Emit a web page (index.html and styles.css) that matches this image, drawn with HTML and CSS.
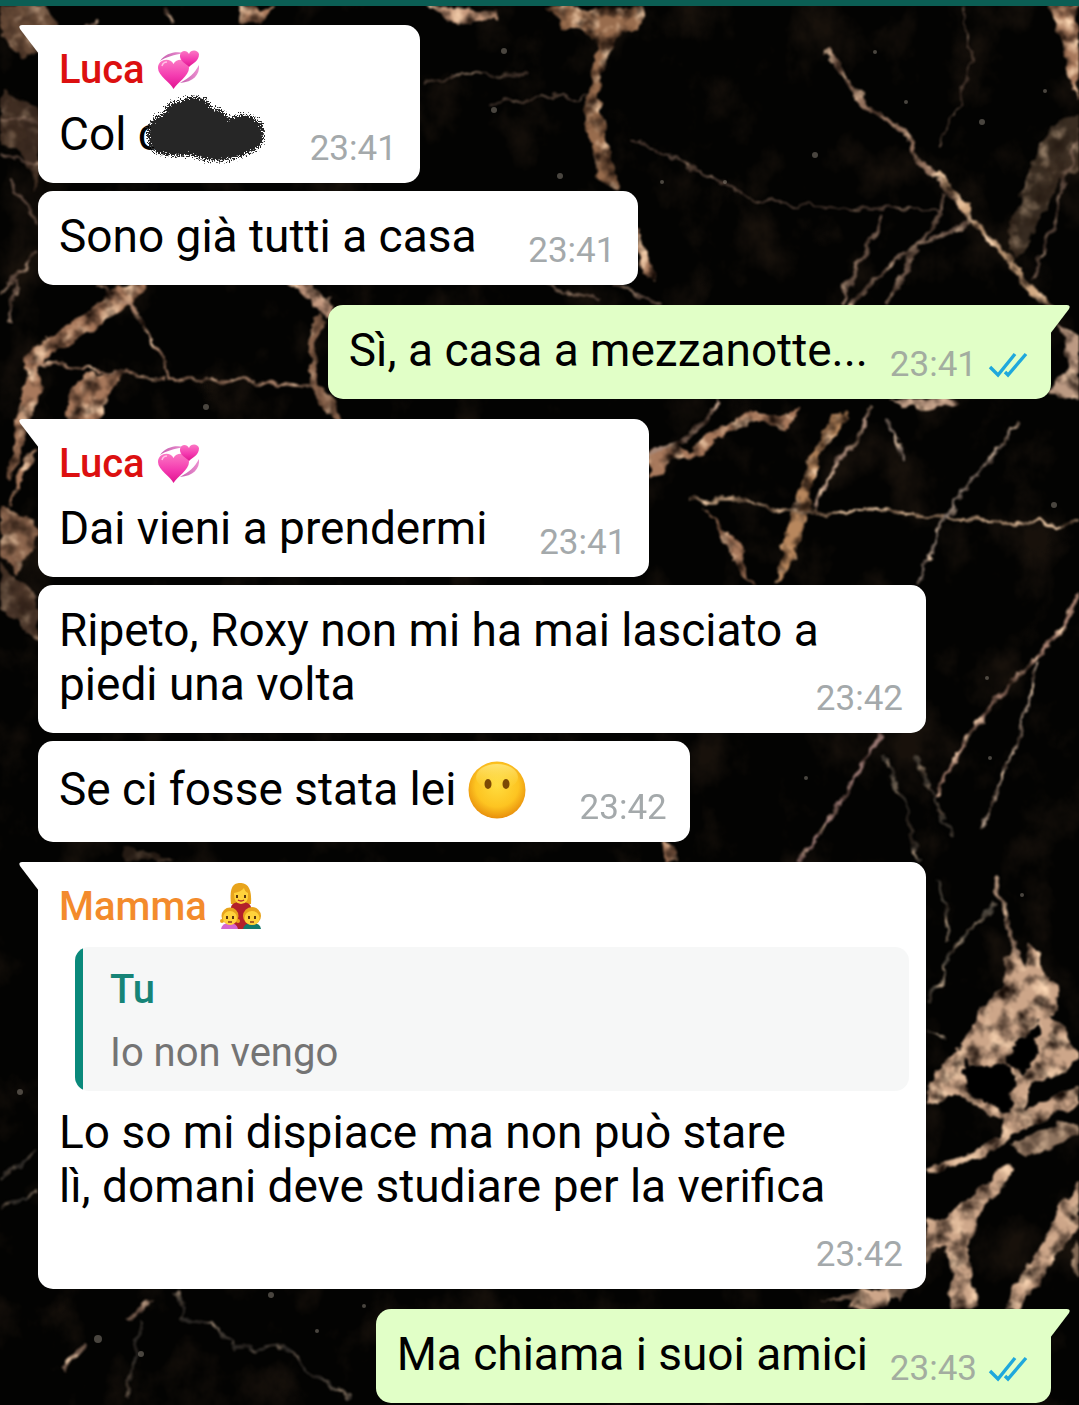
FILE: index.html
```html
<!DOCTYPE html>
<html lang="it">
<head>
<meta charset="utf-8">
<meta name="viewport" content="width=device-width, initial-scale=1">
<title>Chat</title>
<link rel="stylesheet" href="styles.css">
</head>
<body>
<svg class="defs" aria-hidden="true">
  <defs>
    <linearGradient id="pink" x1="0" y1="0" x2="0" y2="1"><stop offset="0" stop-color="#fb78c4"/><stop offset=".55" stop-color="#f43bb0"/><stop offset="1" stop-color="#e0148f"/></linearGradient>
    <linearGradient id="orbit" x1="0" y1="0" x2="1" y2="0"><stop offset="0" stop-color="#c45fae"/><stop offset="1" stop-color="#ec8fd0"/></linearGradient>
    <radialGradient id="face" cx=".5" cy=".42" r=".58"><stop offset="0" stop-color="#ffdc3e"/><stop offset=".65" stop-color="#fdc421"/><stop offset="1" stop-color="#e88f0c"/></radialGradient>
    <linearGradient id="shine" x1="0" y1="0" x2="0" y2="1"><stop offset="0" stop-color="#fff7a8" stop-opacity=".6"/><stop offset="1" stop-color="#ffe14a" stop-opacity="0"/></linearGradient>
    <filter id="grain" x="-5%" y="-5%" width="110%" height="110%">
      <feTurbulence type="fractalNoise" baseFrequency=".8" numOctaves="1" seed="4" result="n"/>
      <feDisplacementMap in="SourceGraphic" in2="n" scale="16" xChannelSelector="R" yChannelSelector="G"/>
    </filter>
    <symbol id="hearts" viewBox="0 0 42 42">
      <path d="M2 12C8 4 17 2 26 4C16 6 8 8 2 12Z" fill="url(#orbit)"/>
      <path d="M41 16C42 26 35 33 22 34C31 29 37 24 41 16Z" fill="url(#orbit)"/>
      <path d="M15.500 40C13 34 0 27 0 19C0 10 12 8 15.500 15C19 8 31 10 31 19C31 27 19 34 15.500 40Z" fill="url(#pink)"/>
      <path d="M4 17Q5 13 9 13" stroke="#ffc0e6" stroke-width="1.500" fill="none"/>
      <path d="M31 18C29 15 21 12 22 6C23 1 29 1 31 5C33 0 40 1 41 5C41 12 35 14 31 18Z" fill="url(#pink)"/>
    </symbol>
    <symbol id="ticks" viewBox="0 0 40 26">
      <path d="M2 15L10 23L27 2M17 20L20 23L38 2" fill="none" stroke="#1fa8dc" stroke-width="3.400"/>
    </symbol>
    <symbol id="tail" viewBox="0 0 20 29"><path d="M20 0H3Q-1 0 1 4L20 29Z" fill="currentColor"/></symbol>
  </defs>
</svg>
<div class="app">
  <svg class="marble" viewBox="0 0 1079 1405" preserveAspectRatio="xMidYMin slice" aria-hidden="true">
    <defs>
      <filter id="rough" x="0" y="0" width="100%" height="100%" filterUnits="userSpaceOnUse" color-interpolation-filters="sRGB">
        <feTurbulence type="fractalNoise" baseFrequency=".06" numOctaves="3" seed="8" result="n"/>
        <feDisplacementMap in="SourceGraphic" in2="n" scale="14" xChannelSelector="R" yChannelSelector="G" result="d"/>
        <feTurbulence type="fractalNoise" baseFrequency=".06" numOctaves="4" seed="21" result="m"/>
        <feColorMatrix in="m" values="0 0 0 0 .08  0 0 0 0 .04  0 0 0 0 .02  2.400 0 0 0 -1" result="dark"/>
        <feComposite in="dark" in2="d" operator="in" result="spots"/>
        <feColorMatrix in="m" values="0 0 0 0 1  0 0 0 0 .86  0 0 0 0 .72  0 3 0 0 -1.500" result="light"/>
        <feComposite in="light" in2="d" operator="in" result="glints"/>
        <feMerge><feMergeNode in="d"/><feMergeNode in="glints"/><feMergeNode in="spots"/></feMerge>
        <feGaussianBlur stdDeviation="1"/>
      </filter>
      <filter id="ragged" x="-20%" y="-20%" width="140%" height="140%">
        <feTurbulence type="fractalNoise" baseFrequency=".09" numOctaves="3" seed="5" result="n"/>
        <feDisplacementMap in="SourceGraphic" in2="n" scale="16" xChannelSelector="R" yChannelSelector="G"/>
        <feGaussianBlur stdDeviation="1"/>
      </filter>
      <filter id="dust" x="0" y="0" width="100%" height="100%" color-interpolation-filters="sRGB">
        <feTurbulence type="fractalNoise" baseFrequency=".018 .014" numOctaves="5" seed="3"/>
        <feColorMatrix values="0 0 0 0 .34  0 0 0 0 .24  0 0 0 0 .16  0 3 0 0 -1.550"/>
      </filter>
    </defs>
    <rect width="1079" height="1405" fill="#030302"/>
    <rect width="1079" height="1405" filter="url(#dust)" opacity=".25"/>
    <g filter="url(#rough)">
      <g fill="#a8795c">
        <path d="M0 6H45L60 26L38 50L20 60L0 30Z" opacity=".6"/>
        <path d="M236 6H272L262 25H240Z"/>
        <path d="M425 6L450 8L500 12L496 18L455 22Z" fill="#c79a7d"/>
        <path d="M545 6H645L640 30L620 32L606 60L598 95L606 140L620 190L615 194L600 180L587 120L586 98L598 50L590 32L565 28Z" fill="#986c4d"/>
        <path d="M636 215L644 250L656 280L642 276L636 245Z"/>
        <path d="M1050 6H1079V100L1066 65Z"/>
        <path d="M1079 110L1050 130L1030 165L1018 205L1005 230L1015 260L1035 230L1048 205L1060 180L1079 170Z" opacity=".45" fill="#785d47"/>
        <path d="M0 90L38 110V190L20 150L0 140Z" opacity=".35"/>
        <path d="M145 284L140 296L62 348L42 362L36 370L40 390L26 436L14 475L8 480L16 420L26 378L28 352L60 330L105 300L120 284Z"/>
        <path d="M84 374H122L106 402L98 430H62L70 400Z"/>
        <path d="M287 284H312L334 304V318L318 308Z" fill="#c59a80"/>
        <path d="M318 310L326 320L314 345L318 384L334 396L342 420L328 415L308 386L308 340Z" opacity=".8"/>
        <path d="M38 450L24 480L8 510L14 490L26 452Z"/>
        <path d="M0 510L36 520V546L24 562L18 575L8 558L0 556Z" opacity=".8"/>
        <path d="M0 560L38 600V646L24 625L0 610Z" opacity=".4"/>
        <path d="M650 450L675 445L690 452L720 425L750 412L780 416L800 405L786 430L776 424L750 422L728 430L700 455L672 462L650 478Z"/>
        <path d="M832 412L850 418L822 450L812 490L806 525L790 570L776 584L785 530L800 488L815 448Z" fill="#b8875d"/>
        <path d="M705 505L722 528L740 540L746 575L756 586L738 572L726 542Z"/>
        <path d="M890 400L920 412L960 405L950 398ZM1058 318L1079 340V400L1066 398L1050 395L1070 370Z" fill="#bc9a83"/>
        <path d="M661 842H678L682 862H664Z"/>
        <path d="M120 842L138 850L180 862H125Z" opacity=".2"/>
      </g>
      <g fill="#cda689">
        <path d="M1006 955L1014 945L1026 965L1031 944L1040 950L1044 970L1056 985L1057 1008L1049 1016L1063 1026L1074 1042L1079 1048V1062L1065 1074L1030 1082L1028 1110L1079 1086V1108L1024 1125L1008 1142L980 1158L926 1173L926 1168L972 1152L1002 1135L1004 1120L990 1112L960 1096L926 1102V1090L946 1058L962 1046L980 1010L1004 985Z"/>
        <path d="M1079 1125L1062 1120L1030 1135L1010 1145L1025 1155L1050 1150L1079 1135Z" opacity=".7"/>
        <path d="M1008 1162L1015 1170L990 1200L975 1218L968 1245L974 1290H952L948 1245L926 1250V1220L948 1215L970 1198Z"/>
        <path d="M1079 1180L1058 1210L1038 1250L1012 1290H1035L1052 1262L1079 1225Z"/>
        <path d="M926 1235L945 1240L925 1262L900 1300H820L880 1290Z" opacity=".5"/>
        <path d="M1079 1240L1070 1262L1079 1275Z" opacity=".6"/>
        <path d="M860 1290H890L885 1308H850ZM952 1288H975L978 1310H950ZM1012 1288H1035L1022 1310H1005Z"/>
      </g>
      <g fill="none" stroke="#8d7060" stroke-width="3">
        <path d="M826 48L846 80L870 110L905 132L912 155L935 175L972 220" stroke-width="5" stroke="#94725e"/>
        <path d="M935 170L975 222L1008 258L1030 290L1050 308" stroke-width="6" stroke="#d4ab84"/>
        <path d="M974 222L920 245L880 275L850 305M880 215L870 245L850 280L842 304M945 195L940 215L915 250L888 304" stroke-width="4" opacity=".75"/>
        <path d="M630 140L690 165L750 198L800 206L880 211L940 207" stroke-width="2" opacity=".6"/>
        <path d="M422 82L480 75L530 74M490 104L540 98L588 98M963 6L972 60L960 100L938 145" stroke-width="2" opacity=".5"/>
        <path d="M545 284L600 300M612 284L660 304M1079 130L1060 200L1034 280" stroke-width="3" opacity=".6"/>
        <path d="M95 20L78 30M165 6L172 24" opacity=".8"/>
        <path d="M0 120H38M0 155L38 165M10 180L38 225M38 250L15 280L0 292M18 280L6 325" opacity=".6"/>
        <path d="M95 286L130 305L155 345L170 380L245 380L310 388M30 362L110 372L165 378" stroke="#a98169"/>
        <path d="M640 458L690 435L720 400M870 405L862 430L830 475L812 510" stroke="#a58777" stroke-width="4"/>
        <path d="M690 500L740 500L800 513L880 511L950 519L1079 524" stroke="#bc9a7b"/>
        <path d="M1020 422L980 470L945 520L918 584M885 418L905 460" stroke="#81736a"/>
        <path d="M1079 590L1064 628L1000 695L965 740L937 796" stroke="#a78070" stroke-width="4"/>
        <path d="M1040 660L1018 740L982 830" stroke="#ac9787"/>
        <path d="M880 734L830 820L798 862" stroke="#967570" stroke-width="4"/>
        <path d="M883 756L905 800L918 862M914 756L955 838" stroke="#504840" opacity=".7"/>
        <path d="M995 880L1006 910L1016 955" stroke="#ad8e78" stroke-width="5"/>
        <path d="M995 905L955 945L928 1005M938 880L950 940M926 1030L948 1040" stroke="#49443c"/>
        <path d="M0 1210L38 1190M0 1180L38 1150M180 1290L182 1320L215 1324L235 1350L280 1345L350 1400M142 1320L126 1400" stroke="#5a544e" opacity=".5"/>
        <path d="M62 1368L85 1345M130 1320L150 1302" stroke-width="7" stroke="#7d6354"/>
      </g>
    </g>
    <g fill="#050504" filter="url(#ragged)">
      <path d="M1039 1024L1037 1054L1024 1076L1006 1062L1020 1040Z"/>
      <path d="M964 1062L984 1068L1004 1062L1018 1078L1012 1092L1010 1116L990 1106L968 1092Z"/>
    </g>
    <g fill="#8f887c" opacity=".5">
      <circle cx="875" cy="52" r="2"/><circle cx="906" cy="102" r="2"/><circle cx="982" cy="122" r="3"/><circle cx="815" cy="155" r="3"/><circle cx="662" cy="182" r="2"/><circle cx="725" cy="182" r="2"/><circle cx="494" cy="110" r="3"/><circle cx="504" cy="51" r="3"/><circle cx="560" cy="176" r="3"/><circle cx="1045" cy="91" r="2"/><circle cx="206" cy="407" r="3"/><circle cx="1054" cy="505" r="3"/><circle cx="987" cy="678" r="2"/><circle cx="806" cy="778" r="2"/><circle cx="990" cy="758" r="2"/><circle cx="98" cy="1339" r="4"/><circle cx="271" cy="1295" r="3"/><circle cx="364" cy="1306" r="2"/><circle cx="317" cy="1331" r="2"/><circle cx="20" cy="1092" r="3"/><circle cx="1022" cy="895" r="2"/><circle cx="141" cy="1354" r="3"/>
    </g>
  </svg>
  <header class="toolbar"></header>
  <main class="chat">
    <section class="group">
      <article class="bubble first">
        <svg class="tail"><use href="#tail"/></svg>
        <h2 class="sender red">Luca <svg class="emoji"><use href="#hearts"/></svg></h2>
        <div class="body"><p class="text">Col c<span class="hidden-word">o<svg class="scribble" viewBox="0 0 124 70" aria-hidden="true"><path filter="url(#grain)" fill="#262626" d="M4 40C4 27 14 20 22 18C22 8 34 5 40 5C44 -1 66 0 69 13C76 13 84 17 86 24C96 16 116 20 120 32C123 45 118 56 104 59C94 65 64 70 50 60C34 62 10 61 7 52Z"/></svg></span></p><time class="time">23:41</time></div>
      </article>
      <article class="bubble">
        <div class="body"><p class="text">Sono già tutti a casa</p><time class="time">23:41</time></div>
      </article>
    </section>
    <section class="group mine">
      <article class="bubble first">
        <svg class="tail"><use href="#tail"/></svg>
        <div class="body"><p class="text">Sì, a casa a mezzanotte...</p><span class="time">23:41<svg class="ticks"><use href="#ticks"/></svg></span></div>
      </article>
    </section>
    <section class="group">
      <article class="bubble first">
        <svg class="tail"><use href="#tail"/></svg>
        <h2 class="sender red">Luca <svg class="emoji"><use href="#hearts"/></svg></h2>
        <div class="body"><p class="text">Dai vieni a prendermi</p><time class="time">23:41</time></div>
      </article>
      <article class="bubble">
        <div class="body"><p class="text">Ripeto, Roxy non mi ha mai lasciato a piedi una volta</p><time class="time">23:42</time></div>
      </article>
      <article class="bubble">
        <div class="body"><p class="text">Se ci fosse stata lei <svg class="emoji-large" viewBox="0 0 58 58"><circle cx="29" cy="29" r="28.500" fill="url(#face)"/><ellipse cx="29" cy="16" rx="21" ry="13" fill="url(#shine)"/><ellipse cx="20" cy="23" rx="3.500" ry="5" fill="#7d4a05"/><ellipse cx="38" cy="23" rx="3.500" ry="5" fill="#7d4a05"/></svg></p><time class="time">23:42</time></div>
      </article>
    </section>
    <section class="group">
      <article class="bubble first">
        <svg class="tail"><use href="#tail"/></svg>
        <h2 class="sender orange">Mamma <svg class="emoji family" viewBox="0 0 42 46">
          <path d="M11 21C9 3 14 0 20 0C27 0 32 4 31 21Z" fill="#e8a41c"/>
          <path d="M11 46V24Q12 19 21 19Q30 19 31 24V46Z" fill="#b3202b"/>
          <path d="M14 10Q21 9 24 5Q25 9 28 10Q29 21 21 21Q14 21 14 10Z" fill="#ffd23c"/>
          <path d="M17 12v3M25 12v3" stroke="#5a3510" stroke-width="2"/><path d="M18 17Q21 19 24 17" stroke="#b3202b" stroke-width="1.500" fill="none"/>
          <path d="M1 46Q2 40 9 40Q17 40 18 46Z" fill="#d566cf"/><path d="M23 46Q24 40 32 40Q40 40 41 46Z" fill="#14796c"/>
          <circle cx="10" cy="33" r="8.500" fill="#e8a41c"/><circle cx="2" cy="38" r="2" fill="#e8a41c"/><circle cx="18" cy="38" r="2" fill="#e8a41c"/><ellipse cx="10" cy="35" rx="7" ry="7" fill="#ffd23c"/>
          <circle cx="32" cy="33" r="9" fill="#e8a41c"/><ellipse cx="32" cy="35" rx="7.500" ry="7" fill="#ffd23c"/>
          <path d="M7 33v3M13 33v3M29 33v3M35 33v3" stroke="#5a3510" stroke-width="2"/><path d="M8 39h4M30 39h4" stroke="#8a3a1c" stroke-width="1.500"/>
        </svg></h2>
        <blockquote class="quote"><h3 class="quote-author">Tu</h3><p class="quote-text">Io non vengo</p></blockquote>
        <div class="body"><p class="text">Lo so mi dispiace ma non può stare<br>lì, domani deve studiare per la verifica</p><time class="time">23:42</time></div>
      </article>
    </section>
    <section class="group mine">
      <article class="bubble first">
        <svg class="tail"><use href="#tail"/></svg>
        <div class="body"><p class="text">Ma chiama i suoi amici</p><span class="time">23:43<svg class="ticks"><use href="#ticks"/></svg></span></div>
      </article>
    </section>
  </main>
</div>
</body>
</html>
```
FILE: styles.css
```css
* { box-sizing: border-box; }
body, h2, h3, p, blockquote { margin: 0; }
body { background: #000; font-family: Roboto, "Liberation Sans", sans-serif; color: #000; }
.defs { position: absolute; width: 0; height: 0; }
.app { position: relative; min-height: 100vh; overflow: hidden; }
.marble { position: absolute; inset: 0; width: 100%; height: 100%; }
.toolbar { position: relative; height: 6px; background: #0b5e54; }
.chat { position: relative; display: flex; flex-direction: column; gap: 20px; padding: 19px 28px 2px 38px; }
.group { display: flex; flex-direction: column; align-items: flex-start; gap: 8px; }
.mine { align-items: flex-end; }
.bubble { position: relative; max-width: 888px; padding: 18px 23px 13px 21px; border-radius: 15px; background: #fff; color: #fff; }
.mine .bubble { background: #e1ffc7; color: #e1ffc7; }
.bubble.first { border-top-left-radius: 0; }
.mine .bubble.first { border-top-left-radius: 15px; border-top-right-radius: 0; }
.tail { position: absolute; top: 0; left: -19px; width: 20px; height: 29px; }
.mine .tail { left: auto; right: -19px; transform: scaleX(-1); }
.sender { margin-bottom: 10px; font-size: 40px; line-height: 54px; font-weight: 500; }
.red { color: #dc1010; }
.orange { color: #f38b2c; }
.emoji { display: inline-block; width: 42px; height: 42px; margin-left: 3px; vertical-align: -8px; }
.family { height: 46px; vertical-align: -9px; }
.body { display: grid; }
.text, .time { grid-area: 1 / 1; }
.text { padding-bottom: 9px; font-size: 46px; line-height: 54px; color: #000; }
.text::after { content: ""; display: inline-block; width: 139px; }
.mine .text::after { width: 160px; }
.time { place-self: end; display: flex; align-items: center; gap: 11px; font-size: 35px; line-height: 42px; color: #a4a9ab; }
.mine .time { color: #a3ada0; }
.ticks { width: 40px; height: 26px; }
.emoji-large { width: 58px; height: 58px; margin: 2px 2px 1px 0; vertical-align: -15px; }
.hidden-word { position: relative; display: inline-block; width: 96px; text-align: right; }
.scribble { position: absolute; left: -19px; top: -12px; width: 124px; height: 70px; }
.quote { margin: 13px -6px 14px 16px; padding: 16px 27px 11px 35px; border-radius: 14px; background: linear-gradient(to right, #0a897b 8px, #f6f7f7 8px); }
.quote-author { font-size: 40px; line-height: 54px; font-weight: 500; color: #168477; }
.quote-text { margin-top: 9px; font-size: 40px; line-height: 54px; color: #747474; }
```
